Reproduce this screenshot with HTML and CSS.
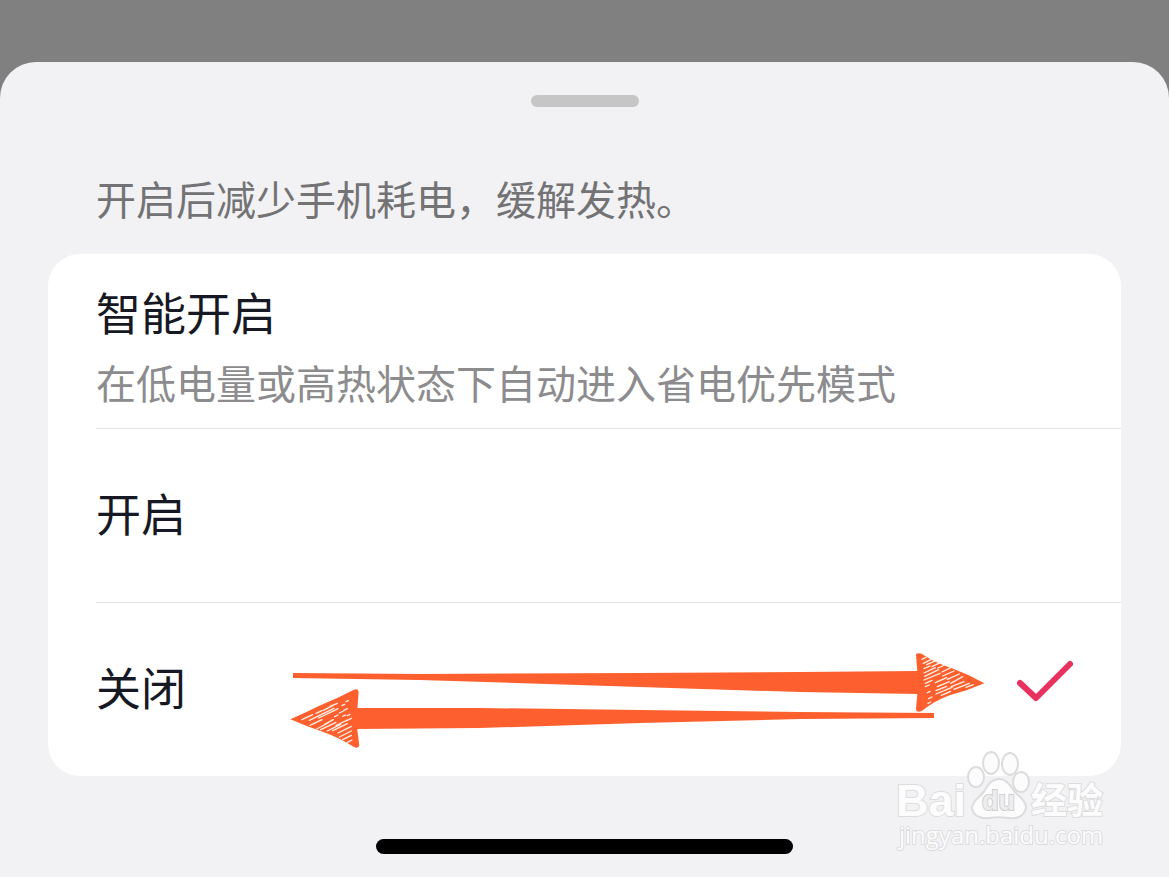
FILE: index.html
```html
<!DOCTYPE html>
<html lang="zh-CN">
  <head>
    <meta charset="UTF-8" />
    <meta name="viewport" content="width=device-width, initial-scale=1.0" />
    <title>省电优先模式</title>
    <link rel="stylesheet" href="styles.css">
  </head>
  <body>
    <main class="sheet">
      <div class="handle"></div>
      <p class="tip" id="tip">开启后减少手机耗电，缓解发热。</p>

      <form class="options" aria-labelledby="tip">
        <label class="option option-tall">
          <span class="option-text">
            <span class="option-title">智能开启</span>
            <span class="option-desc">在低电量或高热状态下自动进入省电优先模式</span>
          </span>
          <input type="radio" name="mode" value="auto" />
          <svg class="check" viewBox="0 0 56 44"><path d="M3 23 L19 38 L53 4" /></svg>
        </label>
        <label class="option">
          <span class="option-text">
            <span class="option-title">开启</span>
          </span>
          <input type="radio" name="mode" value="on" />
          <svg class="check" viewBox="0 0 56 44"><path d="M3 23 L19 38 L53 4" /></svg>
        </label>
        <label class="option">
          <span class="option-text">
            <span class="option-title">关闭</span>
          </span>
          <input type="radio" name="mode" value="off" checked />
          <svg class="check" viewBox="0 0 56 44"><path d="M3 23 L19 38 L53 4" /></svg>

          <!-- hand drawn arrows -->
          <svg class="arrows" viewBox="288 650 700 100" aria-hidden="true">
            <g class="arrow">
              <path d="M293 673 L420 674 L640 673 L800 672 L918 671 L918 694 L800 692 L640 687 L420 680 L293 678 Z" />
              <path d="M934 713 L800 712 L640 710 L480 708 L356 708 L356 729 L480 728 L640 723 L800 719 L934 718 Z" />
              <path transform="translate(286 685) scale(.3333)" d="M13 103 Q60 82 100 62 Q150 42 204 14 Q216 10 218 20 L214 74 L214 136 L220 182 Q216 192 204 186 Q160 158 110 140 Q60 124 13 103 Z" />
              <path transform="translate(908 648) scale(.3333)" d="M24 18 Q36 12 48 22 Q84 46 130 60 Q180 78 229 106 Q180 128 125 142 Q80 158 40 190 Q24 194 24 182 L28 138 L28 72 Z" />
            </g>
            <g class="scratch" transform="translate(286 685) scale(.3333)">
              <path d="M48 104l32-15M90 85l18-8M70 106l74-36M112 76l28-14M98 99l54-26M132 64l22-9M72 121l36-17M92 132l34-18M116 118l26-14M142 78l14-7M104 134l46-22M124 138l40-20M146 95l10-5M160 84l12-6M168 62l8-4M180 50l7-3M174 76l10-5M150 122l34-17M140 137l44-21M170 94l9-4M184 92l8-4M156 144l40-20M160 156l36-18M170 164l26-13M184 172l14-7M180 108l16-8" />
            </g>
            <g class="scratch" transform="translate(908 648) scale(.3333)">
              <path d="M42 34l12-6M46 46l24-12M56 50l28-12M48 62l18-8M72 56l24-12M48 75l34-16M90 60l28-12M50 85l42-20M102 72l28-14M48 96l48-20M104 84l34-15M52 106l20-9M82 104l34-15M118 94l36-16M52 116l12-5M128 106l36-20M88 116l36-15M84 128l32-13M130 116l38-15M58 134l8-4M84 138l48-20M138 124l46-18M62 152l10-5M60 166l8-4M100 142l28-12M174 118l22-8" />
            </g>
          </svg>
        </label>
      </form>

      <div class="home-bar"></div>
    </main>

    <svg class="watermark" viewBox="890 745 224 112" aria-hidden="true">
      <ellipse cx="976" cy="777" rx="8" ry="10" />
      <ellipse cx="991" cy="763" rx="8" ry="11" />
      <ellipse cx="1010" cy="764" rx="8" ry="11" />
      <ellipse cx="1021" cy="782" rx="8" ry="10" />
      <path d="M999 779 C1006 779 1010 785 1014 791 C1019 797 1026 800 1026 808 C1024 817 1016 819 1009 818 C1002 817 996 817 989 818 C981 819 973 816 972 808 C972 800 981 797 985 790 C988 784 992 779 999 779 Z" />
      <text class="logo" x="896" y="816">Bai</text>
      <text class="logo-du" x="982" y="810">du</text>
      <text class="logo-cn" x="1031" y="814">经验</text>
      <text class="url" x="899" y="844">jingyan.baidu.com</text>
    </svg>
  </body>
</html>
```
FILE: styles.css
```css
body {
  margin: 0;
  padding-top: 62px;
  min-height: 100vh;
  box-sizing: border-box;
  display: flex;
  position: relative;
  background-color: #808080;
  font-family: "Noto Sans CJK SC", sans-serif;
}

.sheet {
  flex: 1;
  display: flex;
  flex-direction: column;
  padding: 33px 48px 23px;
  background-color: #f2f2f4;
  border-radius: 36px 36px 0 0;
}

.handle {
  width: 108px;
  height: 12px;
  margin: 0 auto;
  border-radius: 6px;
  background-color: #c6c6c7;
}

.tip {
  margin: 61px 48px 26px;
  font-size: 40px;
  line-height: 60px;
  color: #737375;
}

.options {
  background-color: #fff;
  border-radius: 32px;
}

.option {
  position: relative;
  display: flex;
  align-items: center;
  height: 174px;
  margin-left: 48px;
  padding: 0 48px 6px 0;
  box-sizing: border-box;
  cursor: pointer;
}

.option-tall {
  padding: 10px 48px 0 0;
}

.option + .option {
  border-top: 1px solid #e2e2e4;
}

.option-text {
  flex: 1;
}

.option-title,
.option-desc {
  display: block;
}

.option-title {
  font-size: 45px;
  line-height: 64px;
  color: #161823;
}

.option-desc {
  margin-top: 8px;
  font-size: 40px;
  line-height: 60px;
  color: #8c8c8e;
}

.option input {
  appearance: none;
  width: 0;
  height: 0;
  margin: 0;
}

.check {
  width: 56px;
  height: 44px;
  margin-bottom: 10px;
  visibility: hidden;
  fill: none;
  stroke: #e8315f;
  stroke-width: 6;
  stroke-linecap: round;
  stroke-linejoin: round;
}

.option input:checked + .check {
  visibility: visible;
}

.arrows {
  position: absolute;
  left: 192px;
  top: 47px;
  width: 700px;
  height: 100px;
  pointer-events: none;
}

.arrow {
  fill: #fd602e;
}

.scratch {
  fill: none;
  stroke: #fff0e6;
  stroke-width: 4;
  stroke-linecap: round;
}

.home-bar {
  width: 417px;
  height: 15px;
  margin: auto auto 0;
  border-radius: 8px;
  background-color: #000;
}

.watermark {
  position: absolute;
  right: 55px;
  bottom: 20px;
  width: 224px;
  height: 112px;
  fill: #fcfcfc;
  stroke: #dcdcde;
  stroke-width: 2;
  pointer-events: none;
}

.watermark text {
  paint-order: stroke;
}

.logo {
  font: bold 45px "Liberation Sans", sans-serif;
}

.watermark .logo-du {
  font: bold 27px "Liberation Sans", sans-serif;
  fill: #ededef;
  stroke: #cfcfd1;
}

.logo-cn {
  font: bold 36px "Noto Sans CJK SC", sans-serif;
}

.url {
  font: 24px "Open Sans", sans-serif;
}
```
